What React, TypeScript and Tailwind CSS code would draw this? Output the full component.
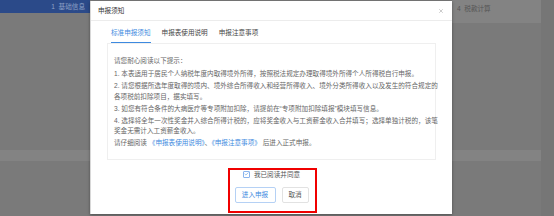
import { Check, X } from "lucide-react";

const font = "font-['Liberation_Sans','Noto_Sans_CJK_SC',sans-serif]";

export default function App() {
  return (
    <div className={`relative w-[554px] h-[216px] overflow-hidden bg-[#7a7a7a] flex ${font}`}>
      {/* page behind the mask */}
      <div className="w-[541px] flex flex-col">
        <div className="h-[24px] flex justify-between">
          <div className="w-[90px] h-[13px] bg-[#2b4a89] flex items-center justify-end pr-[5px] text-[6.6px] leading-[9px] text-[#8ea1c7]">
            1&nbsp;&nbsp;基础信息
          </div>
          <div className="w-[89px] h-[23px] bg-[#838383] pt-[4px] pl-[5px] text-[6.6px] leading-[9px] text-[#555]">
            4&nbsp;&nbsp;税款计算
          </div>
        </div>
        <div className="h-[126px]" />
        <div className="h-[11px] bg-[#838383]" />
      </div>
      <div className="flex-1 bg-[#767676]" />

      {/* dialog */}
      <div className="absolute left-[90px] top-[1px] w-[362px] h-[213px] bg-white border-l border-[#d8d8d8] shadow-[0_1px_3px_rgba(0,0,0,0.35)] flex flex-col">
        <div className="h-[20px] shrink-0 border-b border-[#ececec] flex items-center justify-between pl-[7px] pr-[8px]">
          <span className="text-[6.6px] leading-[9px] text-[#333]">申报须知</span>
          <X className="w-[6px] h-[6px] text-[#999]" strokeWidth={2} />
        </div>

        <div className="flex gap-[11px] pl-[20px] text-[6.6px] leading-[8px]">
          <span className="pt-[8px] pb-[5px] border-b-[1.5px] border-[#3d8ae0] text-[#3d8ae0]">标准申报须知</span>
          <span className="pt-[8px] pb-[5px] text-[#444]">申报表使用说明</span>
          <span className="pt-[8px] pb-[5px] text-[#444]">申报注意事项</span>
        </div>

        <div className="mx-[16px] h-[117px] border-[1.5px] border-[#efefef] pt-[12px] pl-[6px] text-[6.6px] leading-[10.5px] text-[#666] whitespace-nowrap flex flex-col gap-[1.5px]">
          <p className="mb-[1px]">请您耐心阅读以下提示：</p>
          <p>1. 本表适用于居民个人纳税年度内取得境外所得，按照税法规定办理取得境外所得个人所得税自行申报。</p>
          <p>
            2. 请您根据所选年度取得的境内、境外综合所得收入和经营所得收入、境外分类所得收入以及发生的符合规定的
            <br />
            各项税前扣除项目，据实填写。
          </p>
          <p>3. 如您有符合条件的大病医疗等专项附加扣除，请提前在“专项附加扣除填报”模块填写信息。</p>
          <p>
            4. 选择将全年一次性奖金并入综合所得计税的，应将奖金收入与工资薪金收入合并填写；选择单独计税的，该笔
            <br />
            奖金无需计入工资薪金收入。
          </p>
          <p>
            请仔细阅读 <span className="text-[#3d8ae0]">《申报表使用说明》</span>、
            <span className="text-[#3d8ae0]">《申报注意事项》</span> 后进入正式申报。
          </p>
        </div>

        <div className="flex flex-col items-center mt-[9px]">
          <label className="h-[10px] flex items-center gap-[4px] text-[6.6px] leading-[9px] text-[#555]">
            <span className="w-[7px] h-[7px] border border-[#8ab4ee] rounded-[1px] flex items-center justify-center">
              <Check className="w-[6px] h-[6px] text-[#3d8ae0]" strokeWidth={2.5} />
            </span>
            我已阅读并同意
          </label>
          <div className="flex gap-[6px] mt-[8px]">
            <button className="w-[41px] h-[16px] border border-[#b5d1f5] rounded-[2px] text-[6.6px] text-[#3d8ae0] bg-white">
              进入申报
            </button>
            <button className="w-[27px] h-[16px] border border-[#e2e2e2] rounded-[2px] text-[6.6px] text-[#555] bg-white">
              取消
            </button>
          </div>
        </div>
      </div>

      {/* annotation frame */}
      <div className="absolute left-[228px] top-[168px] w-[89px] h-[45px] border-2 border-[#f00000]" />
    </div>
  );
}
